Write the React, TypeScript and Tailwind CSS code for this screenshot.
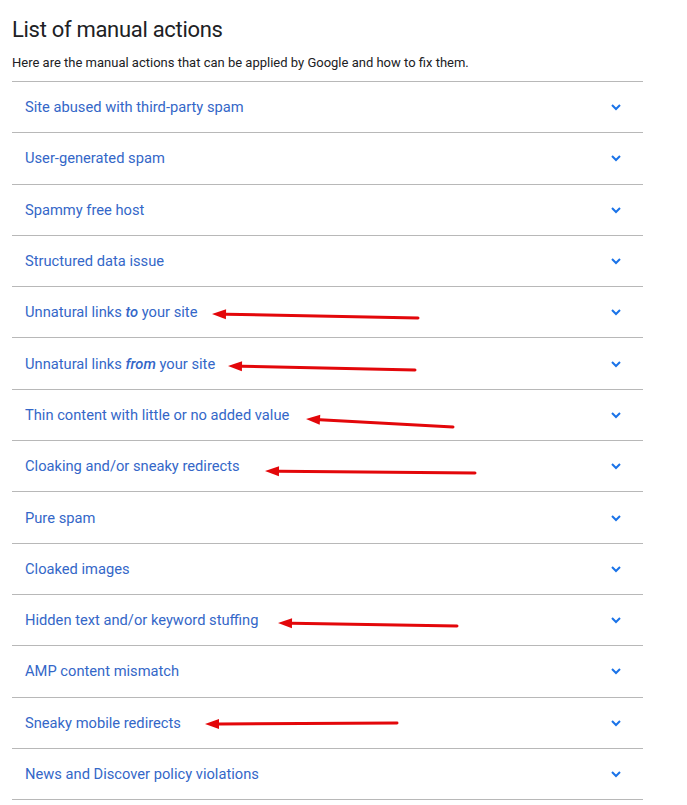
const items: { label: React.ReactNode }[] = [
  { label: "Site abused with third-party spam" },
  { label: "User-generated spam" },
  { label: "Spammy free host" },
  { label: "Structured data issue" },
  { label: <>Unnatural links <em className="font-medium">to</em> your site</> },
  { label: <>Unnatural links <em className="font-medium">from</em> your site</> },
  { label: "Thin content with little or no added value" },
  { label: "Cloaking and/or sneaky redirects" },
  { label: "Pure spam" },
  { label: "Cloaked images" },
  { label: "Hidden text and/or keyword stuffing" },
  { label: "AMP content mismatch" },
  { label: "Sneaky mobile redirects" },
  { label: "News and Discover policy violations" },
];

// annotation arrows: [headX, headY, tailX, tailY]
const arrows: [number, number, number, number][] = [
  [212, 314, 418, 318],
  [228, 366, 415, 370],
  [306, 419, 453, 427],
  [265, 471, 475, 473],
  [278, 623, 457, 626],
  [205, 724, 397, 723],
];

function Chevron() {
  return (
    <svg width="12" height="12" viewBox="0 0 24 24" className="text-[#1a73e8]">
      <path d="M4 8l8 8 8-8" fill="none" stroke="currentColor" strokeWidth="4" strokeLinecap="butt" strokeLinejoin="miter" />
    </svg>
  );
}

function Arrow({ a }: { a: [number, number, number, number] }) {
  const [hx, hy, tx, ty] = a;
  const ang = Math.atan2(hy - ty, hx - tx);
  const len = 14;
  const w = 5;
  const bx = hx - Math.cos(ang) * len;
  const by = hy - Math.sin(ang) * len;
  const px = -Math.sin(ang) * w;
  const py = Math.cos(ang) * w;
  return (
    <g>
      <line x1={tx} y1={ty} x2={bx} y2={by} stroke="#e3070a" strokeWidth="3" strokeLinecap="round" />
      <polygon points={`${hx},${hy} ${bx + px},${by + py} ${bx - px},${by - py}`} fill="#e3070a" />
    </g>
  );
}

export default function App() {
  return (
    <div className="relative w-[687px] h-[805px] bg-white overflow-hidden font-['Roboto',sans-serif]">
      <div className="pl-[12px] w-[643px]">
        <h2 className="pt-[16px] text-[22px] leading-[28px] text-[#202124] tracking-[-0.3px]">
          List of manual actions
        </h2>
        <p className="mt-[10px] text-[13px] leading-[18px] text-[#202124]">
          Here are the manual actions that can be applied by Google and how to fix them.
        </p>
        <div className="mt-[9px] border-t border-[#b8b8b8]">
          {items.map((it, i) => (
            <div key={i} className="h-[51.3px] border-b border-[#b8b8b8] flex items-center justify-between pl-[13px] pr-[21px]">
              <span className="text-[14.7px] text-[#3467c8]">{it.label}</span>
              <Chevron />
            </div>
          ))}
        </div>
      </div>
      <svg className="absolute top-0 left-0 pointer-events-none" width="687" height="805">
        {arrows.map((a, i) => (
          <Arrow key={i} a={a} />
        ))}
      </svg>
    </div>
  );
}
